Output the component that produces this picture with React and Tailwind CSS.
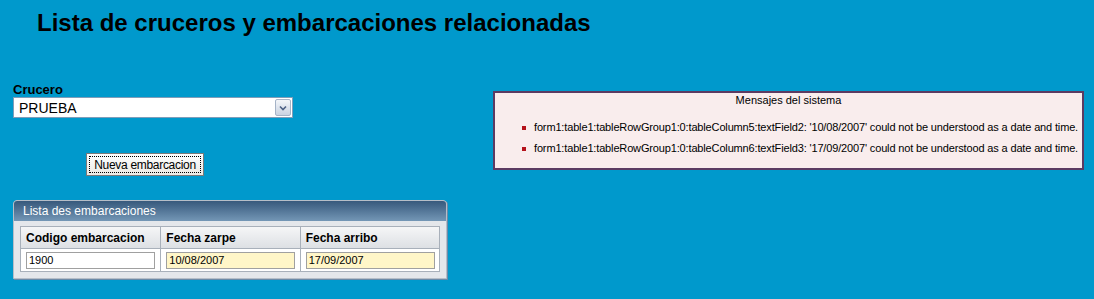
import React from 'react';

const messages = [
  "form1:table1:tableRowGroup1:0:tableColumn5:textField2: '10/08/2007' could not be understood as a date and time.",
  "form1:table1:tableRowGroup1:0:tableColumn6:textField3: '17/09/2007' could not be understood as a date and time.",
];

const columns = ['Codigo embarcacion', 'Fecha zarpe', 'Fecha arribo'];

const App = () => {
  return (
    <div className="w-[1094px] h-[299px] bg-[#0099cc] font-['Liberation_Sans',Arial,sans-serif] text-black overflow-hidden">
      <h1 className="pl-[37px] pt-[9px] text-[24px] leading-[28px] font-bold">
        Lista de cruceros y embarcaciones relacionadas
      </h1>

      <div className="flex mt-[45px]">
        {/* Left column */}
        <div className="w-[480px] pl-[13px]">
          <div className="text-[13px] leading-[15px] font-bold">Crucero</div>
          <div className="w-[280px] h-[21px] bg-white border border-[#7f9db9] flex items-center justify-between">
            <span className="pl-[5px] text-[14px] leading-none">PRUEBA</span>
            <span className="w-[16px] h-[17px] mr-[1px] flex items-center justify-center bg-gradient-to-b from-[#f4f6f9] to-[#c9d3e2] border border-[#a5b3c7] rounded-[2px]">
              <svg width="8" height="6" viewBox="0 0 8 6">
                <path d="M1 1.5 L4 4.5 L7 1.5" fill="none" stroke="#4d6185" strokeWidth="1.6" />
              </svg>
            </span>
          </div>

          <div className="pl-[73px] mt-[35px]">
            <button className="w-[118px] h-[23px] bg-gradient-to-b from-white to-[#ece9e3] border border-[#7a7a7a] flex items-center justify-center p-[2px]">
              <span className="w-full h-full border border-dotted border-black flex items-center justify-center text-[12px] leading-none tracking-[-0.3px]">
                Nueva embarcacion
              </span>
            </button>
          </div>

          {/* Panel */}
          <div className="w-[434px] mt-[24px] rounded-t-[4px] bg-[#e4e7eb] border border-[#b6bec8] shadow-[1px_1px_0_#6a8aa8]">
            <div className="h-[20px] rounded-t-[3px] bg-gradient-to-b from-[#37597c] to-[#7497b6] text-white text-[12px] leading-[20px] pl-[9px]">
              Lista des embarcaciones
            </div>
            <div className="px-[6px] pt-[5px] pb-[6px]">
              <div className="grid grid-cols-3 border border-[#a8b0ba] bg-white">
                {columns.map((c, i) => (
                  <div
                    key={c}
                    className={`h-[22px] flex items-center pl-[5px] text-[12px] font-bold bg-gradient-to-b from-[#f5f6f7] to-[#dde0e4] border-b border-[#a8b0ba] ${i > 0 ? 'border-l' : ''}`}
                  >
                    {c}
                  </div>
                ))}
                <div className="h-[22px] flex items-center pl-[5px]">
                  <div className="w-[129px] h-[17px] bg-white border border-[#a0a0a0] text-[11px] leading-[15px] pl-[2px]">1900</div>
                </div>
                <div className="h-[22px] flex items-center pl-[5px] border-l border-[#a8b0ba]">
                  <div className="w-[129px] h-[17px] bg-[#fff6c8] border border-[#a0a0a0] text-[11px] leading-[15px] pl-[2px]">10/08/2007</div>
                </div>
                <div className="h-[22px] flex items-center pl-[5px] border-l border-[#a8b0ba]">
                  <div className="w-[129px] h-[17px] bg-[#fff6c8] border border-[#a0a0a0] text-[11px] leading-[15px] pl-[2px]">17/09/2007</div>
                </div>
              </div>
            </div>
          </div>
        </div>

        {/* Messages */}
        <div className="ml-[13px] mt-[9px] w-[591px] h-[79px] bg-[#f9eded] border-2 border-[#5c3b62]">
          <div className="text-center text-[11px] leading-[13px] mt-[1px]">Mensajes del sistema</div>
          <ul className="pl-[27px] mt-[14px] space-y-[8px]">
            {messages.map((m) => (
              <li key={m} className="flex items-center gap-[8px] text-[11px] leading-[13px] tracking-[-0.15px] whitespace-nowrap">
                <span className="w-[4px] h-[4px] bg-[#b5121b] shrink-0" />
                {m}
              </li>
            ))}
          </ul>
        </div>
      </div>
    </div>
  );
};

export default App;
